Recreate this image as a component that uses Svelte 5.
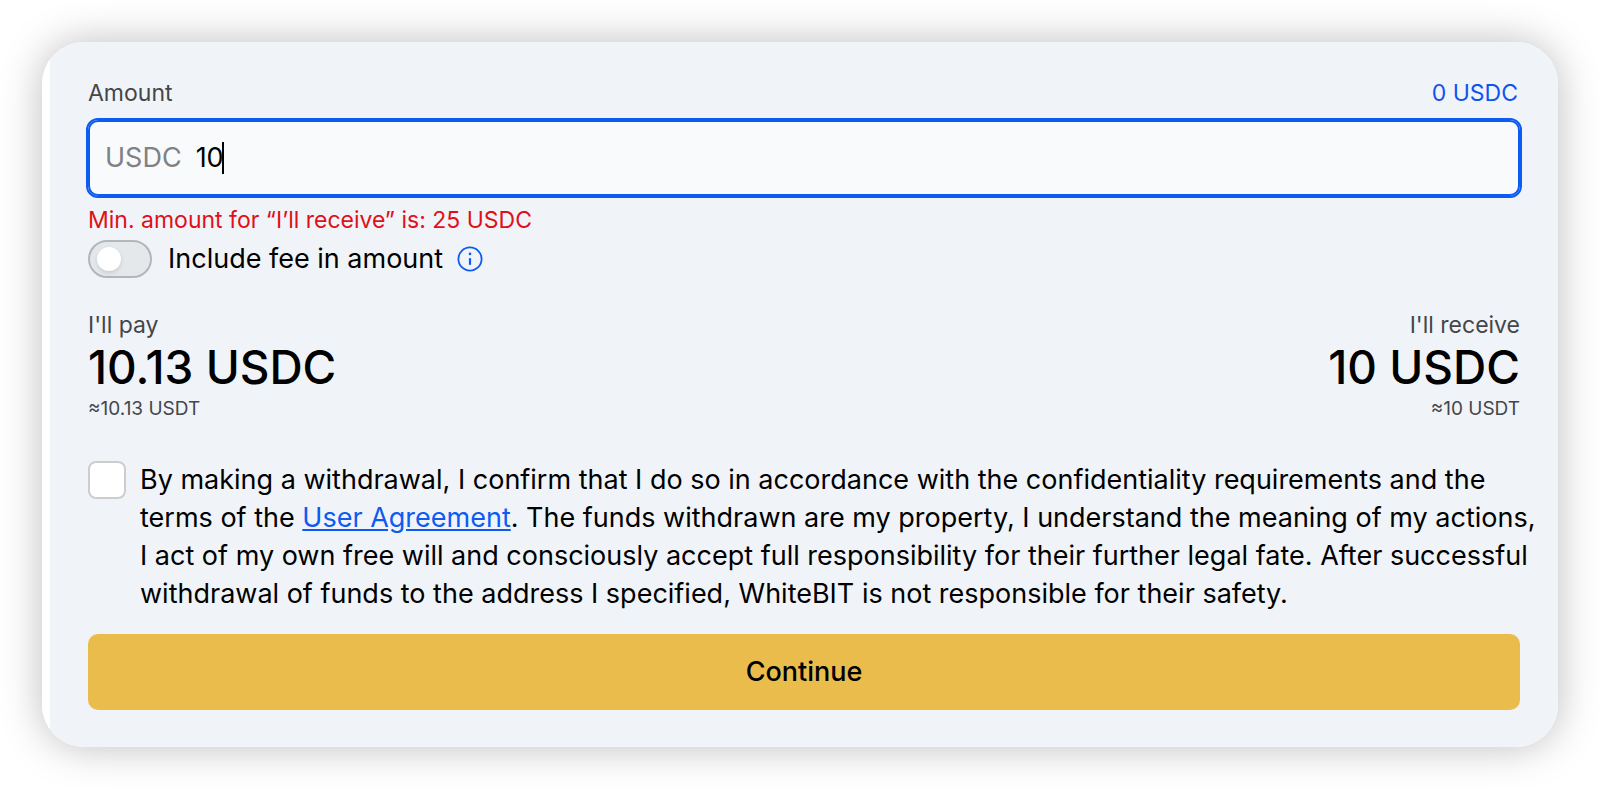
<script>
  let amount = $state("10");
  let includeFee = $state(false);
  let accepted = $state(false);

  const currency = "USDC";
  const balance = 0;
  const minAmount = 25;

  const totals = [
    { label: "I'll pay", value: "10.13", approx: "10.13" },
    { label: "I'll receive", value: "10", approx: "10" },
  ];
</script>

<main>
  <form class="card">
    <div class="field-head">
      <label for="amount">Amount</label>
      <button type="button" class="balance">{balance} {currency}</button>
    </div>

    <label class="field">
      <span class="prefix">{currency}</span>
      <span class="value">
        <input id="amount" type="text" inputmode="decimal" bind:value={amount} />
        <span class="caret"></span>
      </span>
    </label>
    <p class="error">Min. amount for “I’ll receive” is: {minAmount} {currency}</p>

    <div class="fee">
      <input id="fee" class="toggle" type="checkbox" role="switch" bind:checked={includeFee} />
      <label for="fee">Include fee in amount</label>
      <button type="button" class="info" aria-label="About the fee">
        <svg viewBox="0 0 26 26" fill="none">
          <circle cx="13" cy="13" r="11.6" stroke="currentColor" stroke-width="1.8" />
          <circle cx="13" cy="7.9" r="1.3" fill="currentColor" />
          <path d="M13 12.2v6.6" stroke="currentColor" stroke-width="2.2" />
        </svg>
      </button>
    </div>

    <div class="totals">
      {#each totals as total}
        <div class="total">
          <span class="total-label">{total.label}</span>
          <strong>{total.value} {currency}</strong>
          <small>≈{total.approx} USDT</small>
        </div>
      {/each}
    </div>

    <div class="terms">
      <input id="terms" type="checkbox" bind:checked={accepted} />
      <label for="terms">
        By making a withdrawal, I confirm that I do so in accordance with the confidentiality
        requirements and the terms of the <a href="#agreement">User Agreement</a>. The funds
        withdrawn are my property, I understand the meaning of my actions, I act of my own free will
        and consciously accept full responsibility for their further legal fate. After successful
        withdrawal of funds to the address I specified, WhiteBIT is not responsible for their
        safety.
      </label>
    </div>

    <button type="button" class="continue">Continue</button>
  </form>
</main>

<style>
  :global(body) {
    background: #fff;
  }

  main {
    padding: 42px;
    font-family: Inter, "Liberation Sans", sans-serif;
    font-size: 27px;
    line-height: 38px;
    color: #000;
  }

  button,
  input {
    font: inherit;
    color: inherit;
    margin: 0;
    padding: 0;
    border: 0;
    background: none;
  }

  button {
    cursor: pointer;
  }

  .card {
    display: flex;
    flex-direction: column;
    padding: 37px 38px 37px 46px;
    border-radius: 42px;
    background: linear-gradient(90deg, #fff 8px, #f0f4f9 8px);
    box-shadow: 0 0 42px rgba(0, 0, 0, 0.26);
  }

  .field-head {
    display: flex;
    justify-content: space-between;
    margin-bottom: 13px;
    font-size: 23px;
    line-height: 28px;
    color: #444648;
  }

  .balance {
    padding-right: 2px;
    color: #0d55ee;
  }

  .field {
    display: flex;
    align-items: center;
    gap: 14px;
    height: 76px;
    box-sizing: border-box;
    padding: 0 15px;
    border: 2px solid #0d5bf0;
    outline: 2px solid #0d5bf0;
    border-radius: 10px;
    background: #f8fafc;
    cursor: text;
  }

  .prefix {
    color: #808184;
  }

  .value {
    display: flex;
    align-items: center;
  }

  .value input {
    field-sizing: content;
    outline: none;
    caret-color: transparent;
  }

  .caret {
    width: 2px;
    height: 32px;
    margin-left: -2px;
    background: #000;
  }

  .error {
    margin: 10px 0 6px;
    font-size: 23px;
    line-height: 28px;
    color: #e01016;
  }

  .fee {
    display: flex;
    align-items: center;
    margin-bottom: 33px;
  }

  .toggle {
    appearance: none;
    display: flex;
    align-items: center;
    width: 64px;
    height: 38px;
    box-sizing: border-box;
    margin-right: 16px;
    padding: 0 7px;
    border: 2px solid #b3b7ba;
    border-radius: 19px;
    background: #e4e8eb;
    cursor: pointer;
  }

  .toggle::before {
    content: "";
    width: 24px;
    height: 24px;
    border-radius: 50%;
    background: #fff;
    box-shadow: 0 2px 4px rgba(0, 0, 0, 0.12);
  }

  .toggle:checked {
    justify-content: flex-end;
    border-color: #0d5bf0;
    background: #0d5bf0;
  }

  .info {
    display: flex;
    margin-left: 14px;
    color: #0d5bf0;
  }

  .info svg {
    width: 26px;
    height: 26px;
  }

  .totals {
    display: flex;
    justify-content: space-between;
    margin-bottom: 38px;
  }

  .total {
    display: flex;
    flex-direction: column;
  }

  .total:last-child {
    align-items: flex-end;
  }

  .total-label {
    font-size: 23px;
    line-height: 28px;
    color: #444648;
  }

  .total strong {
    font-size: 46px;
    font-weight: 500;
    line-height: 56px;
  }

  .total small {
    font-size: 19px;
    line-height: 28px;
    color: #444648;
  }

  .terms {
    display: flex;
    align-items: flex-start;
    gap: 14px;
    /* the text may run a little into the card's padding */
    margin: 0 -20px 21px 0;
  }

  .terms input {
    appearance: none;
    flex: none;
    width: 38px;
    height: 38px;
    box-sizing: border-box;
    border: 2px solid #cdcdcd;
    border-radius: 8px;
    background: #fff;
    cursor: pointer;
  }

  .terms input:checked {
    border-color: #0d5bf0;
    background: #0d5bf0;
  }

  .terms a {
    color: #0d5bf0;
    text-decoration: underline;
  }

  .continue {
    height: 76px;
    border-radius: 10px;
    background: #e9bc4b;
    font-weight: 500;
  }
</style>
